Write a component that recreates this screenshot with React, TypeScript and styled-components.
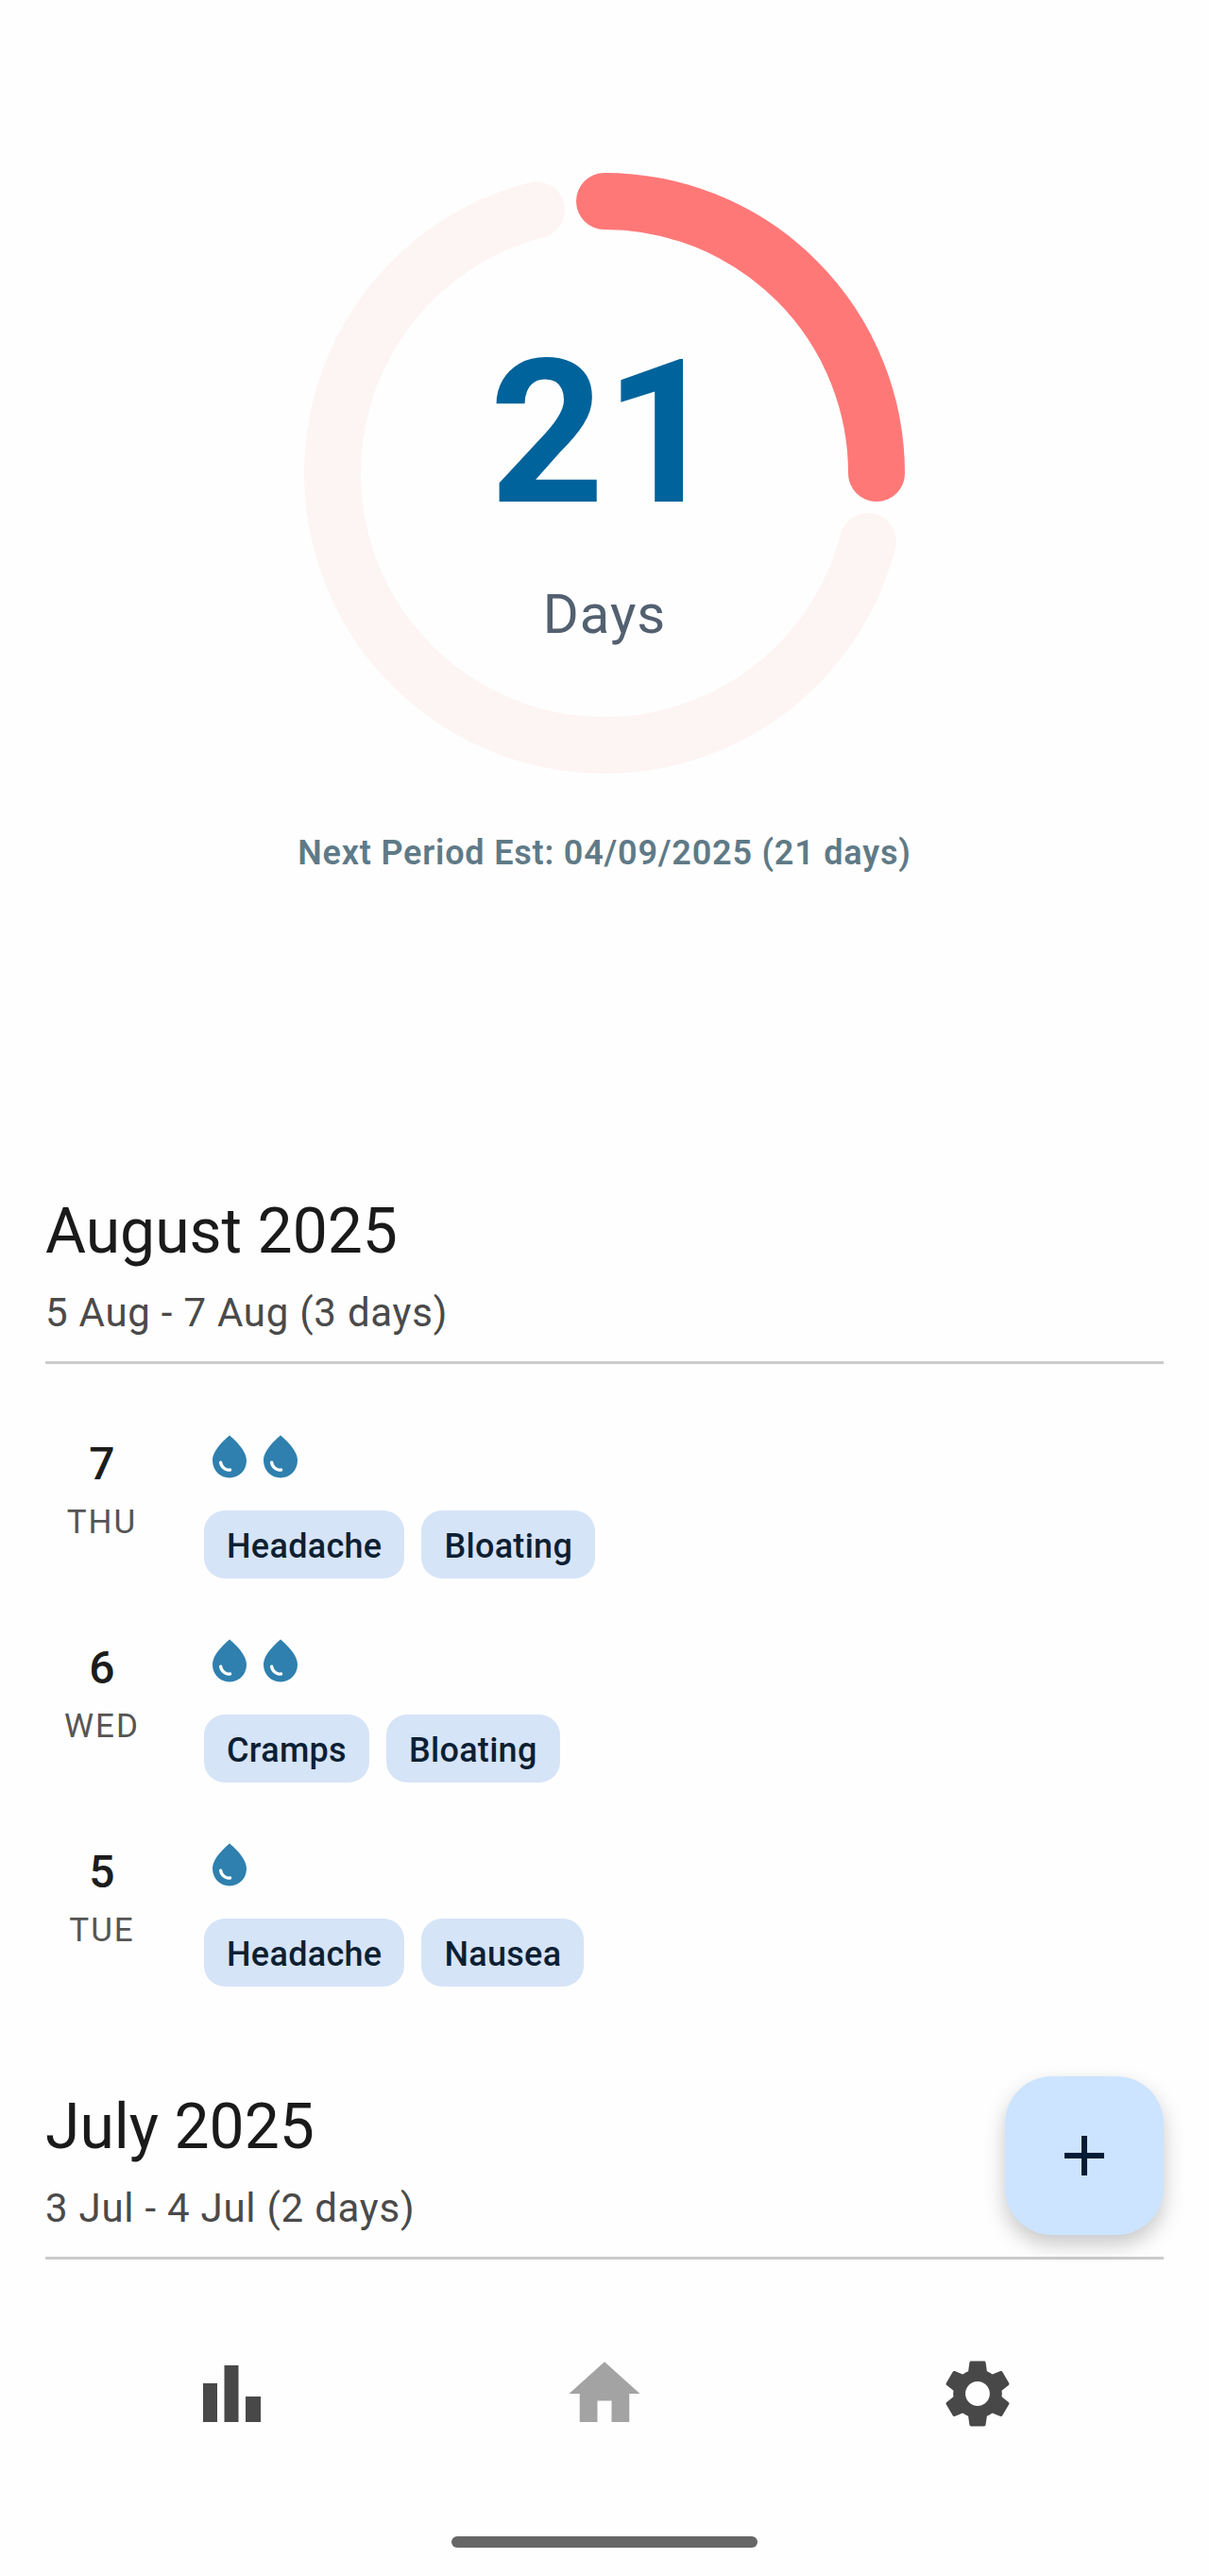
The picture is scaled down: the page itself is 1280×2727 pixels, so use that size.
import React from 'react';
import styled, { createGlobalStyle } from 'styled-components';

const Global = createGlobalStyle`
  html, body { margin: 0; padding: 0; background: #fefefe; }
  * { box-sizing: border-box; }
`;

const Screen = styled.div`
  position: relative;
  width: 1280px;
  height: 2727px;
  overflow: hidden;
  display: flex;
  flex-direction: column;
  background: #fefefe;
  font-family: Roboto, "Liberation Sans", sans-serif;
`;

const Main = styled.main`
  flex: 1;
  min-height: 0;
  overflow: hidden;
`;

const Hero = styled.section`
  display: flex;
  flex-direction: column;
  align-items: center;
  padding-top: 183px;
`;

const Ring = styled.div`
  display: grid;
  width: 636px;
  height: 636px;
  & > * { grid-area: 1 / 1; }
`;

const RingCenter = styled.div`
  display: flex;
  flex-direction: column;
  align-items: center;
  padding-top: 170px;
`;

const Count = styled.div`
  font-size: 212px;
  line-height: 212px;
  font-weight: 700;
  color: #00639b;
`;

const CountLabel = styled.div`
  margin-top: 53px;
  font-size: 58px;
  line-height: 64px;
  letter-spacing: 1px;
  color: #526070;
`;

const NextPeriod = styled.div`
  margin-top: 64px;
  font-size: 36px;
  line-height: 40px;
  font-weight: 600;
  letter-spacing: 0.8px;
  color: #5f7a87;
`;

const Month = styled.section<{ $gap: number }>`
  margin-top: ${p => p.$gap}px;
  padding: 0 48px;
`;

const MonthTitle = styled.h2`
  margin: 0;
  font-size: 66px;
  line-height: 80px;
  font-weight: 400;
  color: #1a1a1a;
`;

const MonthRange = styled.div`
  margin-top: 18px;
  font-size: 42px;
  line-height: 56px;
  letter-spacing: 0.75px;
  color: #4a4a4a;
`;

const Divider = styled.hr`
  margin: 23px 0 0;
  border: 0;
  height: 3px;
  background: #cbcbcb;
`;

const Rows = styled.div`
  display: flex;
  flex-direction: column;
  gap: 60px;
  padding-top: 71px;
`;

const Row = styled.div`
  display: flex;
  gap: 48px;
`;

const DayColumn = styled.div`
  width: 120px;
  flex: none;
  display: flex;
  flex-direction: column;
  align-items: center;
  padding-top: 7px;
`;

const DayNumber = styled.div`
  font-size: 48px;
  line-height: 56px;
  font-weight: 500;
  color: #1c1c1c;
`;

const DayName = styled.div`
  margin-top: 13px;
  font-size: 35px;
  line-height: 42px;
  letter-spacing: 2px;
  color: #555;
`;

const Details = styled.div`
  display: flex;
  flex-direction: column;
  gap: 30px;
`;

const Drops = styled.div`
  display: flex;
  height: 54px;
`;

const Chips = styled.div`
  display: flex;
  gap: 18px;
`;

const Chip = styled.span`
  display: flex;
  align-items: center;
  height: 72px;
  padding: 3px 24px 0;
  border-radius: 22px;
  background: #d6e4f8;
  font-size: 36px;
  letter-spacing: 0.3px;
  font-weight: 500;
  color: #0d1f33;
`;

const Footer = styled.footer`
  flex: none;
  display: flex;
  flex-direction: column;
  align-items: center;
`;

const Nav = styled.nav`
  width: 100%;
  display: grid;
  grid-template-columns: repeat(3, 1fr);
  padding: 0 48px;
  height: 90px;
`;

const NavItem = styled.button<{ $color: string }>`
  display: flex;
  align-items: center;
  justify-content: center;
  padding: 0;
  border: 0;
  background: none;
  color: ${p => p.$color};
`;

const HomeBar = styled.div`
  width: 324px;
  height: 12px;
  margin: 106px 0 30px;
  border-radius: 6px;
  background: #666;
`;

const Fab = styled.button`
  position: absolute;
  left: 1064px;
  top: 2198px;
  width: 168px;
  height: 168px;
  display: flex;
  align-items: center;
  justify-content: center;
  padding: 0;
  border: 0;
  border-radius: 50px;
  background: #cce4ff;
  box-shadow: 0 10px 22px rgba(0, 0, 0, 0.22);
`;

const polar = (r: number, deg: number) => {
  const a = ((deg - 90) * Math.PI) / 180;
  return `${(318 + r * Math.cos(a)).toFixed(2)} ${(318 + r * Math.sin(a)).toFixed(2)}`;
};
const arc = (from: number, to: number) =>
  `M${polar(288, from)} A288 288 0 ${to - from > 180 ? 1 : 0} 1 ${polar(288, to)}`;

const Gauge = () => (
  <svg width="636" height="636" viewBox="0 0 636 636" fill="none" strokeWidth="60" strokeLinecap="round">
    <path d={arc(104.5, 345.5)} stroke="#fdf5f3" />
    <path d={arc(0, 90)} stroke="#ff7878" />
  </svg>
);

const Drop = () => (
  <svg width="54" height="54" viewBox="0 0 24 24" fill="#2f80ae">
    <path d="M12 2c-5.33 4.55-8 8.48-8 11.8 0 4.98 3.8 8.2 8 8.2s8-3.22 8-8.2c0-3.32-2.67-7.25-8-11.8zM7.83 14c.37 0 .67.26.74.62.41 2.22 2.28 2.98 3.64 2.87.43-.02.79.32.79.75 0 .4-.32.73-.72.75-2.13.13-4.62-1.09-5.19-4.12-.08-.45.28-.87.74-.87z" />
  </svg>
);

const BarsIcon = () => (
  <svg width="61" height="60" viewBox="0 0 61 60" fill="currentColor">
    <rect x="0" y="19" width="15" height="41" />
    <rect x="22.5" y="0" width="15" height="60" />
    <rect x="45" y="33" width="16" height="27" />
  </svg>
);

const HomeIcon = () => (
  <svg width="90" height="90" viewBox="0 0 24 24" fill="currentColor">
    <path d="M10 20v-6h4v6h5v-8h3L12 3 2 12h3v8z" />
  </svg>
);

const GearIcon = () => (
  <svg width="86" height="86" viewBox="0 0 24 24" fill="currentColor">
    <path d="M19.14 12.94c.04-.3.06-.61.06-.94 0-.32-.02-.64-.07-.94l2.03-1.58c.18-.14.23-.41.12-.61l-1.92-3.32c-.12-.22-.37-.29-.59-.22l-2.39.96c-.5-.38-1.03-.7-1.62-.94l-.36-2.54c-.04-.24-.24-.41-.48-.41h-3.84c-.24 0-.43.17-.47.41l-.36 2.54c-.59.24-1.13.57-1.62.94l-2.39-.96c-.22-.08-.47 0-.59.22L2.74 8.87c-.12.21-.08.47.12.61l2.03 1.58c-.05.3-.09.63-.09.94s.02.64.07.94l-2.03 1.58c-.18.14-.23.41-.12.61l1.92 3.32c.12.22.37.29.59.22l2.39-.96c.5.38 1.03.7 1.62.94l.36 2.54c.05.24.24.41.48.41h3.84c.24 0 .44-.17.47-.41l.36-2.54c.59-.24 1.13-.56 1.62-.94l2.39.96c.22.08.47 0 .59-.22l1.92-3.32c.12-.22.07-.47-.12-.61l-2.01-1.58zM12 15.6c-1.98 0-3.6-1.62-3.6-3.6s1.62-3.6 3.6-3.6 3.6 1.62 3.6 3.6-1.62 3.6-3.6 3.6z" />
  </svg>
);

const PlusIcon = () => (
  <svg width="42" height="42" viewBox="0 0 42 42" fill="#001d35">
    <rect x="18" y="0" width="6" height="42" />
    <rect x="0" y="18" width="42" height="6" />
  </svg>
);

const days = [
  { n: 7, d: 'THU', drops: 2, tags: ['Headache', 'Bloating'] },
  { n: 6, d: 'WED', drops: 2, tags: ['Cramps', 'Bloating'] },
  { n: 5, d: 'TUE', drops: 1, tags: ['Headache', 'Nausea'] },
];

export default function App() {
  return (
    <Screen>
      <Global />
      <Main>
        <Hero>
          <Ring>
            <Gauge />
            <RingCenter>
              <Count>21</Count>
              <CountLabel>Days</CountLabel>
            </RingCenter>
          </Ring>
          <NextPeriod>Next Period Est: 04/09/2025 (21 days)</NextPeriod>
        </Hero>
        <Month $gap={341}>
          <MonthTitle>August 2025</MonthTitle>
          <MonthRange>5 Aug - 7 Aug (3 days)</MonthRange>
          <Divider />
          <Rows>
            {days.map(day => (
              <Row key={day.n}>
                <DayColumn>
                  <DayNumber>{day.n}</DayNumber>
                  <DayName>{day.d}</DayName>
                </DayColumn>
                <Details>
                  <Drops>
                    {Array.from({ length: day.drops }, (_, i) => (
                      <Drop key={i} />
                    ))}
                  </Drops>
                  <Chips>
                    {day.tags.map(t => (
                      <Chip key={t}>{t}</Chip>
                    ))}
                  </Chips>
                </Details>
              </Row>
            ))}
          </Rows>
        </Month>
        <Month $gap={109}>
          <MonthTitle>July 2025</MonthTitle>
          <MonthRange>3 Jul - 4 Jul (2 days)</MonthRange>
          <Divider />
        </Month>
      </Main>
      <Footer>
        <Nav>
          <NavItem $color="#484848"><BarsIcon /></NavItem>
          <NavItem $color="#a3a3a3"><HomeIcon /></NavItem>
          <NavItem $color="#484848"><GearIcon /></NavItem>
        </Nav>
        <HomeBar />
      </Footer>
      <Fab><PlusIcon /></Fab>
    </Screen>
  );
}
